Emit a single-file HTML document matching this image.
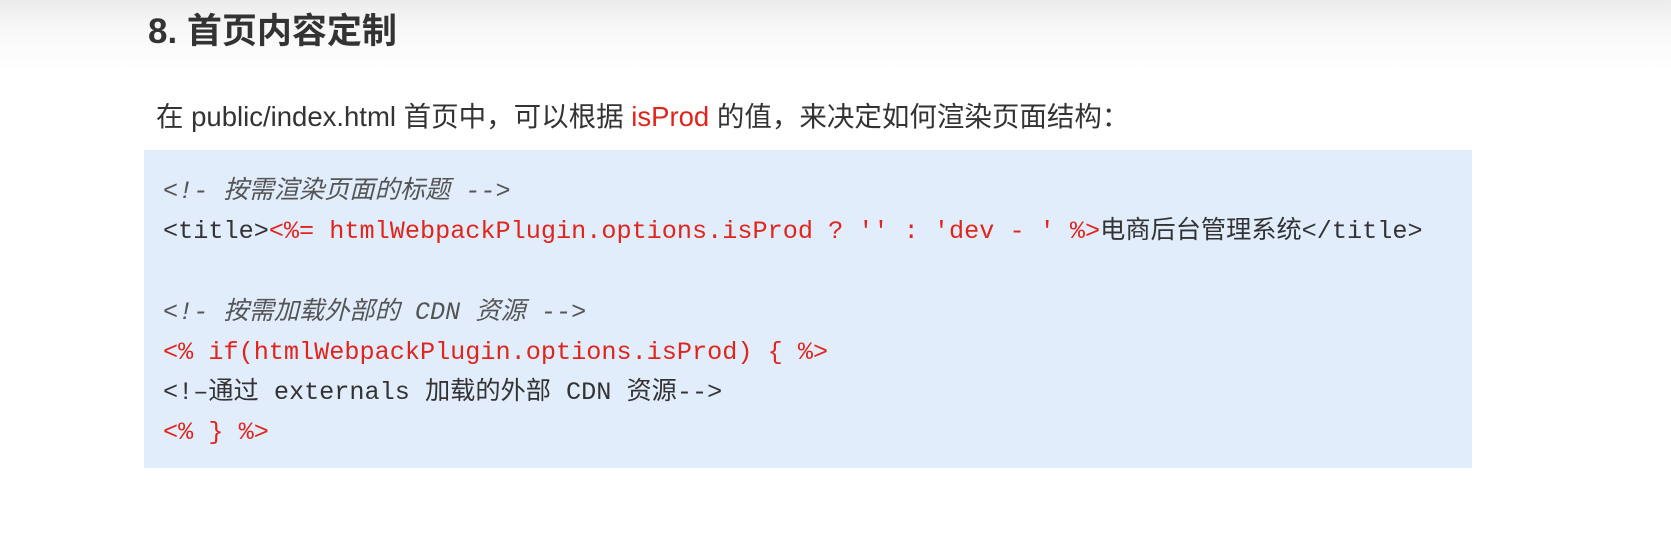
<!DOCTYPE html>
<html><head><meta charset="utf-8"><style>
html,body{margin:0;padding:0}
body{width:1671px;height:540px;overflow:hidden;position:relative;background:linear-gradient(#ececec 0px,#f8f8f8 30px,#fff 70px);font-family:"Liberation Sans","Noto Sans CJK SC",sans-serif;}
h1{position:absolute;left:148px;top:10px;margin:0;font-size:35px;line-height:44px;font-weight:bold;color:#333;}
.p{position:absolute;left:156px;top:99px;font-size:27.5px;line-height:36px;color:#333;white-space:nowrap}
.red{color:#e0251c}
.box{position:absolute;left:144px;top:150px;width:1328px;height:318px;background:#e2edfc;}
pre{position:absolute;left:163px;top:172px;margin:0;font-family:"Liberation Mono","Noto Sans CJK SC",monospace;font-size:25.2px;line-height:40.2px;color:#333;}
.c{color:#555;font-style:italic}
.r{color:#e0251c}
</style></head><body>
<h1>8. 首页内容定制</h1>
<div class="p">在 public/index.html 首页中，可以根据 <span class="red">isProd</span> 的值，来决定如何渲染页面结构：</div>
<div class="box"></div>
<pre><span class="c">&lt;!- 按需渲染页面的标题 --&gt;</span>
&lt;title&gt;<span class="r">&lt;%= htmlWebpackPlugin.options.isProd ? '' : 'dev - ' %&gt;</span>电商后台管理系统&lt;/title&gt;

<span class="c">&lt;!- 按需加载外部的 CDN 资源 --&gt;</span>
<span class="r">&lt;% if(htmlWebpackPlugin.options.isProd) { %&gt;</span>
&lt;!–通过 externals 加载的外部 CDN 资源--&gt;
<span class="r">&lt;% } %&gt;</span></pre>
</body></html>
